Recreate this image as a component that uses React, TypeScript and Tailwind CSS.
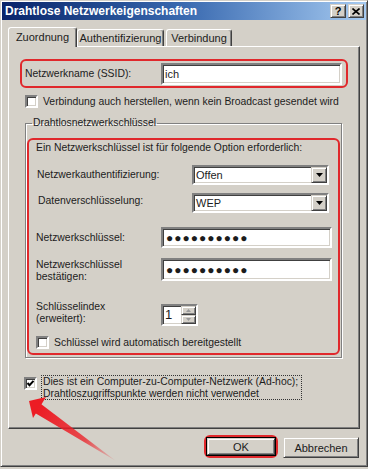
import type { ReactNode } from 'react'

const sunken =
  'border-2 border-t-[#808080] border-l-[#808080] border-r-white border-b-white shadow-[inset_1px_1px_0_#404040,inset_-1px_-1px_0_#d4d0c8] bg-white'
const raised =
  'border border-t-[#d4d0c8] border-l-[#d4d0c8] border-r-[#404040] border-b-[#404040] shadow-[inset_1px_1px_0_#ffffff,inset_-1px_-1px_0_#808080] bg-[#d4d0c8]'
const redBox = 'border-2 border-[#e0282c] rounded-[6px]'

function Checkbox({ checked = false }: { checked?: boolean }) {
  return (
    <div className={`${sunken} w-[13px] h-[13px] shrink-0 flex items-center justify-center`}>
      {checked && (
        <svg width="9" height="9" viewBox="0 0 9 9">
          <polyline points="1.5,4 3.5,6.2 7.5,1.8" fill="none" stroke="#000" strokeWidth="2" />
        </svg>
      )}
    </div>
  )
}

function ArrowButton({ className = '' }: { className?: string }) {
  return (
    <div className={`${raised} w-[16px] h-[16px] flex items-center justify-center ${className}`}>
      <svg width="7" height="4" viewBox="0 0 7 4">
        <polygon points="0,0 7,0 3.5,4" fill="#000" />
      </svg>
    </div>
  )
}

function Select({ value }: { value: string }) {
  return (
    <div className={`${sunken} w-[137px] h-[20px] flex items-center pl-[2px] pr-0`}>
      <span className="flex-1 text-[11px]">{value}</span>
      <ArrowButton />
    </div>
  )
}

function Password({ className = '' }: { className?: string }) {
  return (
    <div className={`${sunken} w-[171px] flex items-center pl-[3px] ${className}`}>
      <span className="text-[12px] tracking-[1px] font-bold">●●●●●●●●●●</span>
    </div>
  )
}

function Tab({ children, active = false, w }: { children: ReactNode; active?: boolean; w: string }) {
  return (
    <div
      className={`${w} flex items-center justify-center rounded-t-[3px] border-t border-l border-r border-t-white border-l-white border-r-[#404040] shadow-[inset_-1px_0_0_#808080] bg-[#d4d0c8] ${
        active ? 'h-[20px] relative z-10 -mb-px pb-[2px]' : 'h-[17px]'
      }`}
    >
      {children}
    </div>
  )
}

export default function App() {
  return (
    <div className="relative w-[368px] h-[469px] bg-[#d4d0c8] font-['Liberation_Sans',Arial,sans-serif] text-[10.4px] leading-[12px] text-[#1c1c1c]">
      <div className="flex flex-col w-[368px] h-[467px] p-px border border-t-[#d4d0c8] border-l-[#d4d0c8] border-r-[#404040] border-b-[#404040] shadow-[inset_1px_1px_0_#ffffff,inset_-1px_-1px_0_#808080]">
        <div className="h-[18px] flex items-center bg-linear-to-r from-[#0a246a] via-[#3a6ab0] to-[#a6caf0] pl-[3px] pr-[2px]">
          <span className="text-white font-bold text-[12px] flex-1">Drahtlose Netzwerkeigenschaften</span>
          <div className="flex gap-[2px]">
            <div className={`${raised} w-[16px] h-[14px] flex items-center justify-center font-bold text-[11px] text-black`}>
              ?
            </div>
            <div className={`${raised} w-[16px] h-[14px] flex items-center justify-center`}>
              <svg width="8" height="7" viewBox="0 0 8 7">
                <path d="M0.5 0.5 L7.5 6.5 M7.5 0.5 L0.5 6.5" stroke="#000" strokeWidth="1.6" />
              </svg>
            </div>
          </div>
        </div>

        <div className="px-[6px] flex flex-col">
          <div className="mt-[7px] h-[19px] flex items-end text-[11px]">
            <Tab active w="w-[69px]">
              Zuordnung
            </Tab>
            <Tab w="w-[87px]">Authentifizierung</Tab>
            <div className="w-[2px]" />
            <Tab w="w-[66px]">Verbindung</Tab>
          </div>

          <div className="h-[383px] border border-t-white border-l-white border-r-[#404040] border-b-[#404040] shadow-[inset_-1px_-1px_0_#808080] px-[11px] pt-[12px] flex flex-col">
            <div className={`${redBox} h-[29px] flex items-center pl-[3px] pr-[4px]`}>
              <span>Netzwerkname (SSID):</span>
              <div className={`${sunken} ml-auto w-[181px] h-[22px] flex items-center pl-[2px] text-[11px]`}>ich</div>
            </div>

            <div className="mt-[7px] flex items-center pl-[5px] gap-[5px] whitespace-nowrap">
              <Checkbox />
              <span>Verbindung auch herstellen, wenn kein Broadcast gesendet wird</span>
            </div>

            <fieldset className="mt-[9px] ml-[5px] mr-[6px] px-px pb-[2px] border border-[#808080] shadow-[inset_1px_1px_0_#ffffff,1px_1px_0_#ffffff]">
              <legend className="ml-[5px] px-px leading-[12px]">Drahtlosnetzwerkschlüssel</legend>
              <div className={`${redBox} mt-[9px] h-[217px] flex flex-col pt-[2px]`}>
                <div className="pl-[7px] h-[12px] whitespace-nowrap">
                  Ein Netzwerkschlüssel ist für folgende Option erforderlich:
                </div>

                <div className="mt-[11px] h-[20px] flex items-center pl-[8px]">
                  <span className="w-[155px]">Netzwerkauthentifizierung:</span>
                  <Select value="Offen" />
                </div>

                <div className="mt-[8px] h-[20px] flex items-center pl-[9px]">
                  <span className="w-[154px] -mt-[4px]">Datenverschlüsselung:</span>
                  <Select value="WEP" />
                </div>

                <div className="mt-[14px] h-[21px] flex items-center pl-[7px]">
                  <span className="w-[125px]">Netzwerkschlüssel:</span>
                  <Password className="h-[21px]" />
                </div>

                <div className="mt-[10px] h-[23px] flex items-start pl-[7px]">
                  <span className="w-[125px] mt-px">
                    Netzwerkschlüssel
                    <br />
                    bestätigen:
                  </span>
                  <Password className="h-[23px]" />
                </div>

                <div className="mt-[23px] h-[22px] flex items-start pl-[7px]">
                  <span className="w-[125px] -mt-[3px]">
                    Schlüsselindex
                    <br />
                    (erweitert):
                  </span>
                  <div className={`${sunken} w-[37px] h-[22px] flex`}>
                    <span className="flex-1 pl-[2px] pt-[3px] text-[13px]">1</span>
                    <div className="flex flex-col w-[15px]">
                      <div className={`${raised} h-[9px] flex items-center justify-center`}>
                        <svg width="5" height="3" viewBox="0 0 5 3">
                          <polygon points="0,3 5,3 2.5,0" fill="#9a9a9a" />
                        </svg>
                      </div>
                      <div className={`${raised} h-[9px] flex items-center justify-center`}>
                        <svg width="5" height="3" viewBox="0 0 5 3">
                          <polygon points="0,0 5,0 2.5,3" fill="#9a9a9a" />
                        </svg>
                      </div>
                    </div>
                  </div>
                </div>

                <div className="mt-[10px] flex items-center pl-[7px] gap-[5px]">
                  <Checkbox />
                  <span>Schlüssel wird automatisch bereitgestellt</span>
                </div>
              </div>
            </fieldset>

            <div className="mt-[17px] flex items-start pl-[4px] gap-[4px]">
              <div className="mt-[2px]">
                <Checkbox checked />
              </div>
              <div className="border border-dotted border-[#333] px-px h-[25px] w-[261px] whitespace-nowrap">
                Dies ist ein Computer-zu-Computer-Netzwerk (Ad-hoc);
                <br />
                Drahtloszugriffspunkte werden nicht verwendet
              </div>
            </div>
          </div>

          <div className="mt-[6px] flex justify-end items-start gap-[5px] pr-px text-[11px]">
            <div className={`${redBox} w-[74px] h-[23px] flex items-center justify-center`}>
              <div className="border border-black w-[70px] h-[19px]">
                <div className={`${raised} w-full h-full flex items-center justify-center`}>OK</div>
              </div>
            </div>
            <div className={`${raised} mt-[2px] w-[76px] h-[21px] flex items-center justify-center`}>Abbrechen</div>
          </div>
        </div>
      </div>

      <svg className="absolute inset-0 pointer-events-none" width="368" height="469" viewBox="0 0 368 469">
        <defs>
          <linearGradient id="arrowFade" x1="38" y1="409" x2="116" y2="461" gradientUnits="userSpaceOnUse">
            <stop offset="0" stopColor="#ec1c24" stopOpacity="1" />
            <stop offset="0.6" stopColor="#ec1c24" stopOpacity="0.75" />
            <stop offset="1" stopColor="#ec1c24" stopOpacity="0.05" />
          </linearGradient>
        </defs>
        <polygon points="29,401 46,397 33,418" fill="#ec1c24" />
        <polygon points="41,404 116,461 35,413" fill="url(#arrowFade)" />
      </svg>
    </div>
  )
}
